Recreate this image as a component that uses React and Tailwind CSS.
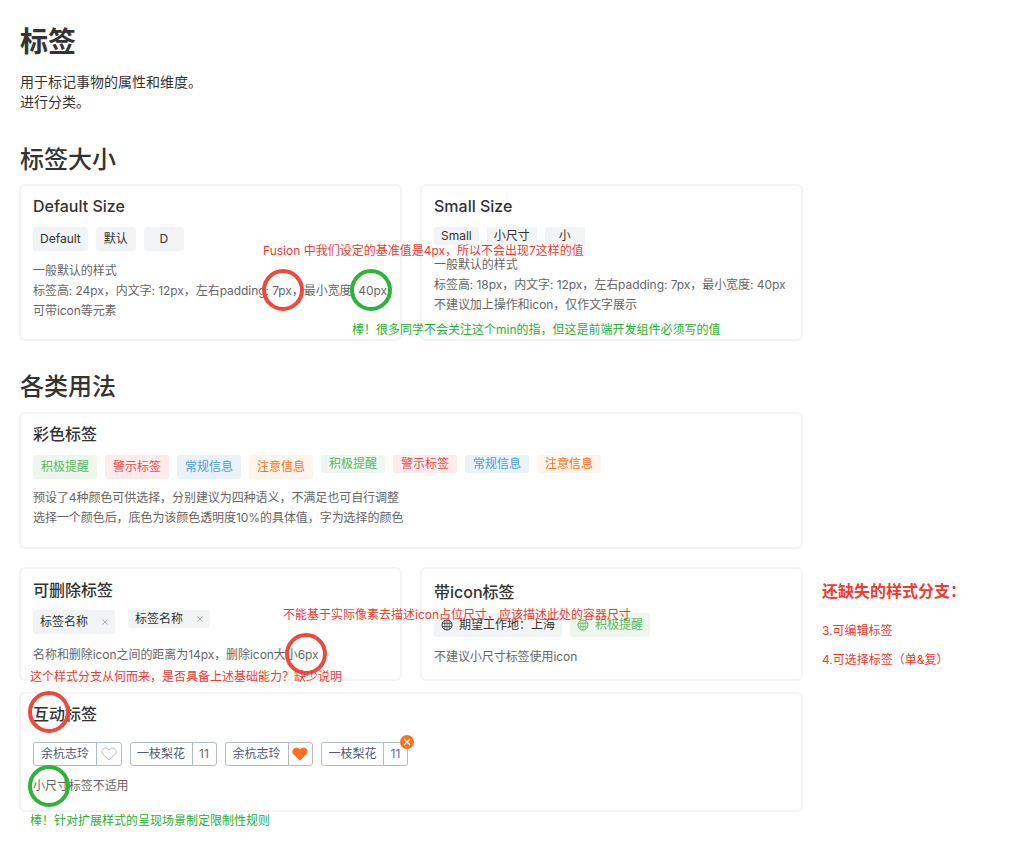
const FONT = 'font-["Inter","Noto_Sans_CJK_SC",sans-serif]';

function Tag({ children, tone = 'gray', small = false, pad = 'px-2' }) {
  const tones = {
    gray: 'bg-[#f2f3f5] text-[#333333]',
    green: 'bg-[#eef7ee] text-[#5fb760]',
    red: 'bg-[#ffebeb] text-[#f04a4a]',
    blue: 'bg-[#e9f2fa] text-[#4a9fdc]',
    orange: 'bg-[#fff5ea] text-[#ff6f1f]',
  };
  return (
    <span className={`inline-flex min-w-[40px] items-center justify-center rounded-[3px] text-xs ${pad} ${small ? 'h-[18px]' : 'h-6'} ${tones[tone]}`}>
      {children}
    </span>
  );
}

function Card({ title, children, className = '' }) {
  return (
    <section className={`rounded-[6px] border-2 border-[#f4f4f5] bg-white px-3 ${className}`}>
      <h3 className="text-base leading-6 font-medium text-[#333333]">{title}</h3>
      {children}
    </section>
  );
}

function Desc({ children, className = '' }) {
  return <div className={`text-xs leading-5 tracking-[-0.06px] whitespace-nowrap text-[#666666] ${className}`}>{children}</div>;
}

function Ring({ color, className }) {
  return <span className={`absolute h-[42px] w-[42px] rounded-full border-[4px] ${color} ${className}`} />;
}

function Note({ children, className, size = 'text-xs' }) {
  return <span className={`absolute leading-5 whitespace-nowrap ${size} ${className}`}>{children}</span>;
}

function Globe({ className }) {
  return (
    <svg viewBox="0 0 12 12" className={`h-3 w-3 ${className}`} fill="none" stroke="currentColor" strokeWidth="1">
      <circle cx="6" cy="6" r="5" />
      <path d="M1.200 4.400h9.600M1.200 7.600h9.600M6 1v10M3.800 1.600v8.800M8.200 1.600v8.800" strokeWidth="0.7" />
    </svg>
  );
}

function Close() {
  return (
    <svg viewBox="0 0 8 8" className="ml-[14px] h-[6px] w-[6px]" fill="none" stroke="#9aa3b2" strokeWidth="1.100">
      <path d="M.5.5l7 7M7.500.5l-7 7" />
    </svg>
  );
}

function DelTag({ small }) {
  return (
    <span className={`inline-flex items-center rounded-[3px] bg-[#f2f3f5] px-[7px] text-xs ${small ? 'h-[18px]' : 'h-6'}`}>
      标签名称<Close />
    </span>
  );
}

function Chip({ label, wide, children }) {
  return (
    <span className="inline-flex h-6 items-center rounded-[3px] border border-[#b4bccc] text-xs text-[#4d5a78]">
      <span className={`flex h-full items-center justify-center border-r border-[#b4bccc] ${wide ? 'w-[63px]' : 'w-[62px]'}`}>{label}</span>
      <span className={`flex h-full items-center justify-center text-[#5f6b85] ${wide ? 'w-[23.5px]' : 'w-[23px]'}`}>{children}</span>
    </span>
  );
}

function Heart({ filled }) {
  return (
    <svg viewBox="0 0 16 14" className="h-[14px] w-4" fill={filled ? '#ff6f1f' : 'none'} stroke={filled ? '#ff6f1f' : '#b4bccc'} strokeWidth="1">
      <path d="M8 13 1.900 7.200C-.1 5.200.7 1.600 3.900 1.100 5.600.9 7 1.700 8 3.100 9 1.700 10.400.9 12.100 1.100c3.200.5 4 4.100 2 6.100z" />
    </svg>
  );
}

export default function App() {
  return (
    <main className={`relative min-h-[864px] w-[1017px] overflow-hidden bg-white pt-[22px] pl-[19px] text-[#333333] ${FONT}`}>
      <div className="w-[784px]">
        <h1 className="pl-px text-[28px] leading-10 font-semibold">标签</h1>
        <p className="mt-[10px] pl-px text-sm leading-5">用于标记事物的属性和维度。<br />进行分类。</p>

        <h2 className="mt-[32px] pl-px text-2xl leading-8 font-medium">标签大小</h2>
        <div className="mt-2 grid grid-cols-2 gap-[18px]">
          <Card title="Default Size" className="h-[157px] pt-2">
            <div className="mt-[9px] flex gap-2">
              <Tag pad="px-[7px]">Default</Tag><Tag pad="px-[7px]">默认</Tag><Tag pad="px-[7px]">D</Tag>
            </div>
            <Desc className="mt-[10px]">一般默认的样式<br />{"标签高: 24px\uFF0C内文字: 12px\uFF0C左右padding: 7px\uFF0C最小宽度: 40px"}<br />可带icon等元素</Desc>
          </Card>
          <Card title="Small Size" className="h-[157px] pt-2">
            <div className="mt-[9px] flex gap-2">
              <Tag small pad="px-[7px]">Small</Tag><Tag small pad="px-[7px]">小尺寸</Tag><Tag small pad="px-[7px]">小</Tag>
            </div>
            <Desc className="mt-[10px]">一般默认的样式<br />{"标签高: 18px\uFF0C内文字: 12px\uFF0C左右padding: 7px\uFF0C最小宽度: 40px"}<br />{"不建议加上操作和icon\uFF0C仅作文字展示"}</Desc>
          </Card>
        </div>

        <h2 className="mt-[30px] pl-px text-2xl leading-8 font-medium">各类用法</h2>
        <Card title="彩色标签" className="mt-[9px] h-[137px] pt-2">
          <div className="mt-[9px] flex items-start gap-2">
            <Tag tone="green">积极提醒</Tag><Tag tone="red">警示标签</Tag><Tag tone="blue">常规信息</Tag><Tag tone="orange">注意信息</Tag>
            <Tag tone="green" small>积极提醒</Tag><Tag tone="red" small>警示标签</Tag><Tag tone="blue" small>常规信息</Tag><Tag tone="orange" small>注意信息</Tag>
          </div>
          <Desc className="mt-[9px]">{"预设了4种颜色可供选择\uFF0C分别建议为四种语义\uFF0C不满足也可自行调整"}<br />{"选择一个颜色后\uFF0C底色为该颜色透明度10%的具体值\uFF0C字为选择的颜色"}</Desc>
        </Card>

        <div className="mt-[18px] grid grid-cols-2 gap-[18px]">
          <Card title="可删除标签" className="h-[114px] pt-[9px]">
            <div className="mt-2 flex items-start gap-[13px]">
              <DelTag /><DelTag small />
            </div>
            <Desc className="mt-[11px]">{"名称和删除icon之间的距离为14px\uFF0C删除icon大小6px"}</Desc>
          </Card>
          <Card title="带icon标签" className="h-[114px] pt-[11px]">
            <div className="mt-[9px] flex gap-2">
              <span className="inline-flex h-6 items-center gap-[6px] rounded-[3px] bg-[#f2f3f5] px-[7px] text-xs"><Globe className="text-[#333333]" />{"期望工作地\uFF1A上海"}</span>
              <span className="inline-flex h-6 items-center gap-[6px] rounded-[3px] bg-[#eef7ee] px-[7px] text-xs text-[#5fb760]"><Globe className="text-[#5fb760]" />积极提醒</span>
            </div>
            <Desc className="mt-[10px]">不建议小尺寸标签使用icon</Desc>
          </Card>
        </div>

        <Card title="互动标签" className="mt-[11px] h-[120px] pt-2">
          <div className="mt-4 flex gap-2">
            <Chip wide label="余杭志玲"><Heart /></Chip>
            <Chip label="一枝梨花">11</Chip>
            <Chip wide label="余杭志玲"><Heart filled /></Chip>
            <span className="relative flex">
              <Chip label="一枝梨花">11</Chip>
              <span className="absolute -top-[7px] -right-[6px] flex h-[14px] w-[14px] items-center justify-center rounded-full bg-[#ff6f1f]">
                <svg viewBox="0 0 8 8" className="h-2 w-2" fill="none" stroke="#ffffff" strokeWidth="1.300"><path d="M1 1l6 6M7 1l-6 6" /></svg>
              </span>
            </span>
          </div>
          <Desc className="mt-[10px]">小尺寸标签不适用</Desc>
        </Card>
      </div>

      <Ring color="border-[#ee4a3c]" className="top-[269px] left-[262px]" />
      <Ring color="border-[#2db23a]" className="top-[269px] left-[350px]" />
      <Ring color="border-[#ee4a3c]" className="top-[633px] left-[285px]" />
      <Ring color="border-[#ee4a3c]" className="top-[691px] left-[28px]" />
      <Ring color="border-[#2db23a]" className="top-[765px] left-[28px]" />

      <Note className="top-[241px] left-[263px] text-[#f5392f]">{"Fusion 中我们设定的基准值是4px\uFF0C所以不会出现7这样的值"}</Note>
      <Note className="top-[320px] left-[352px] text-[#1fb32e]">{"棒\uFF01很多同学不会关注这个min的指\uFF0C但这是前端开发组件必须写的值"}</Note>
      <Note className="top-[605px] left-[283px] text-[#f5392f]">{"不能基于实际像素去描述icon占位尺寸\uFF0C应该描述此处的容器尺寸"}</Note>
      <Note className="top-[667px] left-[30px] text-[#f5392f]">{"这个样式分支从何而来\uFF0C是否具备上述基础能力\uFF1F缺少说明"}</Note>
      <Note className="top-[811px] left-[30px] text-[#1fb32e]">{"棒\uFF01针对扩展样式的呈现场景制定限制性规则"}</Note>
      <Note size="text-base" className="top-[581px] left-[822px] font-semibold text-[#f5392f]">{"还缺失的样式分支\uFF1A"}</Note>
      <Note className="top-[621px] left-[822px] text-[#f5392f]">3.可编辑标签</Note>
      <Note className="top-[650px] left-[822px] text-[#f5392f]">{"4.可选择标签\uFF08单&复\uFF09"}</Note>
    </main>
  );
}
